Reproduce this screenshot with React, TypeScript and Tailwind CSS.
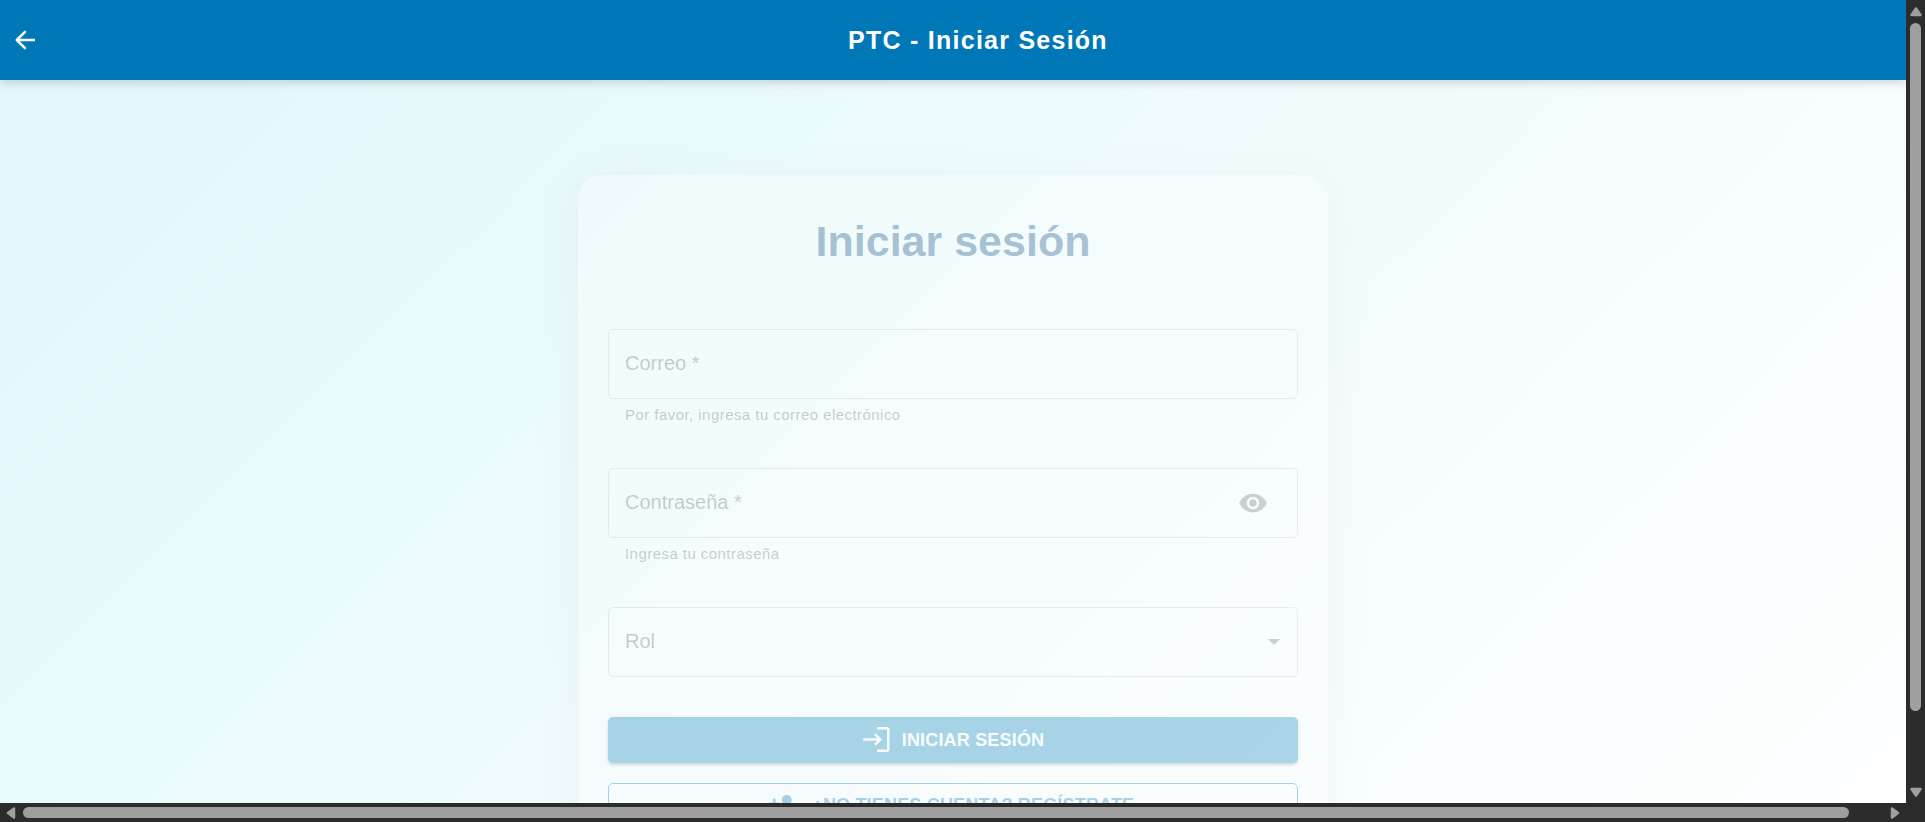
import type { ReactNode } from "react";

function BackIcon() {
  return (
    <svg viewBox="0 0 24 24" className="size-[30px]" fill="currentColor" aria-hidden="true">
      <path d="M20 11H7.83l4.88-4.88c.39-.39.39-1.030 0-1.420a1 1 0 0 0-1.410 0l-6.590 6.590a1 1 0 0 0 0 1.410l6.590 6.590a1 1 0 0 0 1.410-1.410L7.83 13H20z" />
    </svg>
  );
}

function EyeIcon() {
  return (
    <svg viewBox="0 0 24 24" className="size-[30px]" fill="currentColor" aria-hidden="true">
      <path d="M12 4.5C7 4.5 2.73 7.61 1 12c1.73 4.39 6 7.5 11 7.5s9.27-3.11 11-7.5c-1.73-4.39-6-7.5-11-7.5M12 17c-2.76 0-5-2.24-5-5s2.24-5 5-5 5 2.24 5 5-2.24 5-5 5m0-8c-1.66 0-3 1.34-3 3s1.34 3 3 3 3-1.34 3-3-1.34-3-3-3" />
    </svg>
  );
}

function LoginIcon() {
  return (
    <svg viewBox="0 0 24 24" className="size-[30px]" fill="currentColor" aria-hidden="true">
      <path d="M11 7 9.600 8.400l2.600 2.600H1v2h11.200l-2.600 2.600L11 17l5-5zm9 13h-8v2h8c1.100 0 2-.9 2-2V4c0-1.100-.9-2-2-2h-8v2h8z" transform="translate(0 -.4)" />
    </svg>
  );
}

function AddPersonIcon() {
  return (
    <svg viewBox="0 0 24 24" className="size-[30px]" fill="currentColor" aria-hidden="true">
      <path d="M15 12c2.210 0 4-1.790 4-4s-1.790-4-4-4-4 1.790-4 4 1.790 4 4 4m-9-2V7H4v3H1v2h3v3h2v-3h3v-2zm9 4c-2.670 0-8 1.340-8 4v2h16v-2c0-2.660-5.330-4-8-4" />
    </svg>
  );
}

const arrows = {
  up: "M6 3.500 10.500 10H1.500z",
  down: "M6 8.500 1.500 2h9z",
  left: "M3 6 9 1.500v9z",
  right: "M9 6 3 1.500v9z",
};

function ScrollArrow({ direction }: { direction: keyof typeof arrows }) {
  return (
    <svg viewBox="0 0 12 12" className="size-3 shrink-0 text-[#9f9f9f]" aria-hidden="true">
      <path d={arrows[direction]} fill="currentColor" stroke="currentColor" strokeWidth="2.5" strokeLinejoin="round" />
    </svg>
  );
}

function Field({ id, label, helper, children }: { id: string; label: string; helper?: string; children: ReactNode }) {
  return (
    <div>
      <div className="flex h-[70px] items-center rounded-[5px] border border-black/20 pr-[17px] pl-4">
        <label htmlFor={id} className="pb-[2px] text-xl text-black/60">
          {label}
        </label>
        {children}
      </div>
      {helper && (
        <p id={`${id}-helper`} className="mt-[3px] px-[17px] pb-px text-[15px] leading-[25px] tracking-[0.03em] text-black/60">
          {helper}
        </p>
      )}
    </div>
  );
}

export default function App() {
  return (
    <div className="flex h-screen flex-col overflow-hidden bg-[#2c2c2c] font-['Liberation_Sans',Arial,sans-serif]">
      <div className="flex min-h-0 flex-1">
        <div className="flex min-w-0 flex-1 flex-col overflow-hidden bg-linear-135 from-[#e0f7fa] to-white">
          <header className="z-10 flex h-20 shrink-0 items-center bg-[#0077b6] text-white shadow-[0_2px_10px_rgba(0,0,0,0.18)]">
            <button type="button" aria-label="Volver" className="flex size-[50px] items-center justify-center">
              <BackIcon />
            </button>
            <h1 className="flex-1 pt-[2px] text-center text-[25px] font-bold tracking-wider">PTC - Iniciar Sesión</h1>
          </header>

          <main className="flex shrink-0 justify-center pt-[95px]">
            <form
              className="w-full max-w-[750px] rounded-[25px] bg-white px-[30px] pt-10 pb-10 opacity-[0.32] shadow-[0_8px_40px_rgba(0,0,0,0.1)]"
              onSubmit={(event) => event.preventDefault()}
            >
              <h2 className="text-center text-[43px] leading-[52px] font-bold text-[#0f4c81]">Iniciar sesión</h2>

              <div className="mt-[62px] flex flex-col gap-10">
                <Field id="correo" label="Correo *" helper="Por favor, ingresa tu correo electrónico">
                  <input id="correo" type="email" required aria-describedby="correo-helper" className="h-full min-w-0 flex-1 px-2 text-xl outline-none" />
                </Field>
                <Field id="contrasena" label="Contraseña *" helper="Ingresa tu contraseña">
                  <input id="contrasena" type="password" required aria-describedby="contrasena-helper" className="h-full min-w-0 flex-1 px-2 text-xl outline-none" />
                  <button type="button" aria-label="Mostrar contraseña" className="mr-1 flex size-[46px] items-center justify-center text-black/55">
                    <EyeIcon />
                  </button>
                </Field>
                <Field id="rol" label="Rol">
                  <select id="rol" defaultValue="" className="h-full min-w-0 flex-1 appearance-none px-2 text-xl outline-none">
                    <option value="" aria-label="Sin rol" />
                  </select>
                  <svg viewBox="0 0 12 6" className="h-[6px] w-3 text-black/55" aria-hidden="true">
                    <path d="M0 0h12L6 6z" fill="currentColor" />
                  </svg>
                </Field>
              </div>

              <div className="mt-10 flex flex-col gap-5">
                <button
                  type="submit"
                  className="flex h-[46px] items-center justify-center gap-[10px] rounded-[5px] bg-[#0b7fba] text-lg font-bold tracking-[0.01em] text-white shadow-[0_3px_3px_-2px_rgba(0,0,0,0.3),0_2px_3px_0_rgba(0,0,0,0.2),0_1px_6px_0_rgba(0,0,0,0.15)]"
                >
                  <LoginIcon />
                  INICIAR SESIÓN
                </button>
                <button
                  type="button"
                  className="flex h-[46px] items-center justify-center gap-[14px] rounded-[5px] border border-[#0077b6] pr-1 pb-[2px] text-lg font-bold tracking-[0.01em] text-[#0077b6]"
                >
                  <AddPersonIcon />
                  ¿NO TIENES CUENTA? REGÍSTRATE
                </button>
              </div>
            </form>
          </main>
        </div>

        <div className="flex w-[19px] shrink-0 flex-col items-center pt-[5px] pb-1">
          <ScrollArrow direction="up" />
          <div className="mt-[6px] flex min-h-0 w-full flex-1 flex-col items-center">
            <div className="h-[90%] w-[11px] rounded-full bg-[#9f9f9f]" />
          </div>
          <ScrollArrow direction="down" />
        </div>
      </div>

      <div className="flex h-[19px] shrink-0 items-center pr-6 pl-[5px]">
        <ScrollArrow direction="left" />
        <div className="mr-[3px] ml-[6px] flex min-w-0 flex-1">
          <div className="h-[11px] w-[98%] rounded-full bg-[#9f9f9f]" />
        </div>
        <ScrollArrow direction="right" />
      </div>
    </div>
  );
}
